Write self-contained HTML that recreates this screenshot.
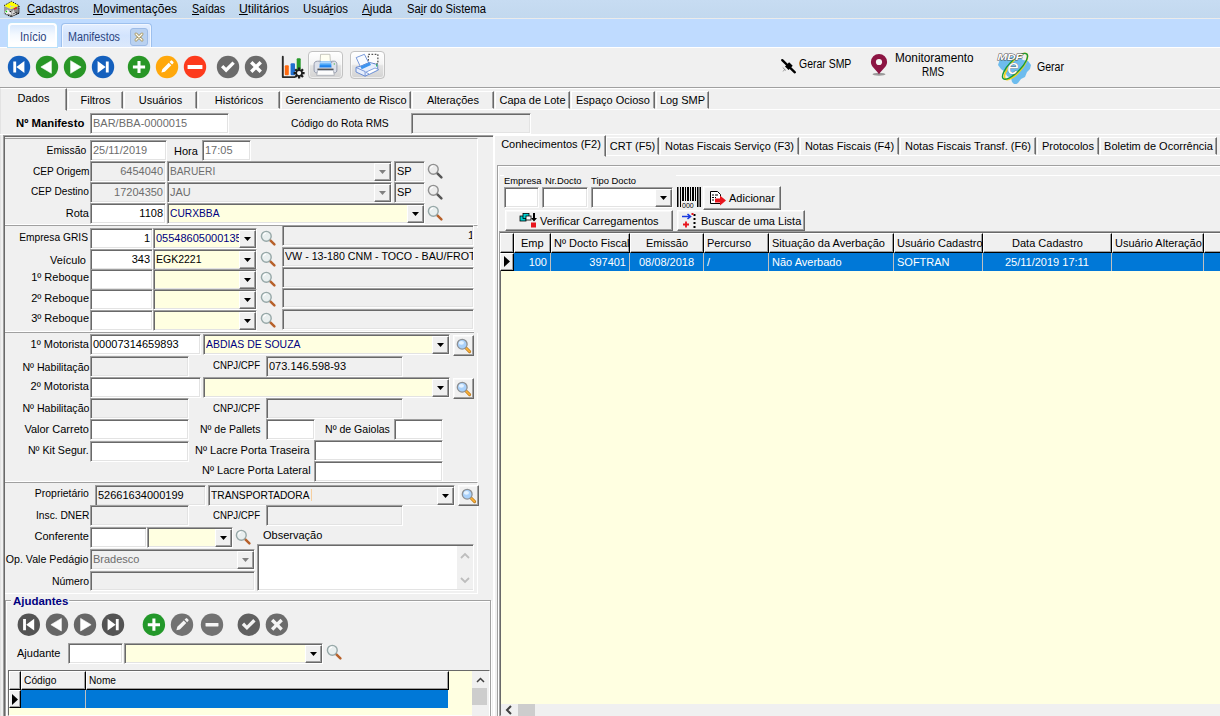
<!DOCTYPE html><html lang="pt-BR"><head><meta charset="utf-8"><title>Manifestos</title><style>
*{box-sizing:border-box;margin:0;padding:0}
html,body{width:1220px;height:716px;overflow:hidden}
body{background:#f0f0f0;font:11px/13px "Liberation Sans",sans-serif;color:#000;position:relative}
.a{position:absolute}
.t{white-space:nowrap;line-height:13px}
.b{font-weight:bold}
.in{background:#fff;border:1px solid;border-color:#a0a0a0 #fff #fff #a0a0a0;box-shadow:inset 1px 1px 0 #696969,inset -1px -1px 0 #e3e3e3;white-space:nowrap;overflow:hidden;padding:3px 0 0 2px;line-height:13px}
.in.r{text-align:right;padding-right:2px}
.in.g{background:#f0f0f0;color:#6d6d6d}
.in.gd{background:#f0f0f0}
.in.w{color:#6d6d6d}
.in.y{background:#ffffe1;color:#000080}
.in.yb{background:#ffffe1}
.cbtn{position:absolute;right:0;top:1px;bottom:0;width:17px;background:#f0f0f0;border:1px solid;border-color:#fff #696969 #696969 #fff;box-shadow:inset -1px -1px 0 #a0a0a0}
.cbtn svg{position:absolute;left:4px;top:6px}
.btn{background:#f0f0f0;border:1px solid;border-color:#fff #696969 #696969 #fff;box-shadow:inset -1px -1px 0 #a0a0a0,inset 1px 1px 0 #f8f8f8}
.sunk{border:1px solid;border-color:#a0a0a0 #fff #fff #a0a0a0}
.hl{height:2px;border-top:1px solid #a0a0a0;border-bottom:1px solid #fff}
.menu{font:12px/15px "Liberation Sans",sans-serif;color:#000}
.menu u{text-decoration:underline;text-underline-offset:1px}
.tab2{border:1px solid;border-color:#fff #696969 transparent #fff;box-shadow:inset -1px 0 0 #a0a0a0;text-align:center;line-height:13px}
.gh{background:#f0f0f0;border:1px solid;border-color:#fff #000 #000 #fff;box-shadow:inset -1px -1px 0 #a0a0a0;line-height:13px;padding:3px 0 0 2px;white-space:nowrap;overflow:hidden}
.gc{color:#fff;line-height:13px;padding-top:4px;white-space:nowrap;overflow:hidden}
</style></head><body>
<div class="a " style="left:0px;top:0px;width:1220px;height:19px;background:linear-gradient(#c7dcf2,#c2d8ee)"></div>
<div class="a " style="left:0px;top:18px;width:1220px;height:1px;background:#ebebeb"></div>
<svg class="a" style="left:3px;top:0px" width="18" height="18" viewBox="0 0 18 18"><path d="M1 5.800L8.500 1.500 16 5.800 8 9.300z" fill="#ffff00"/><path d="M1 6l7 3.300v7.200L1 13z" fill="#9a9a9a"/><path d="M8 9.300l8-3.500v7.400l-8 3.300z" fill="#8c8c8c"/><path d="M1 5.600L8.500 1.300 16 5.600" fill="none" stroke="#000" stroke-width="1" stroke-dasharray="1 1.100"/><path d="M16 6v7.200L8 16.600 1 13.200" fill="none" stroke="#000" stroke-width="1.100" stroke-dasharray="1 .800"/><path d="M1.500 12l3-2.500 2 1.500 1.500-1 .500 5-3-1.500-1.500 1z" fill="#f4f4f4"/><path d="M9 12l1.500-2.500 1.500 4 1-2.500v4l-3.500 1.500z" fill="#d8d8d8"/><path d="M7.500 5v3.500M7.500 6.500h4" stroke="#ccc" stroke-width=".800" fill="none"/><rect x="10.800" y="8.200" width="1.600" height="1.200" fill="#f00"/><rect x="12.200" y="7.400" width="1.800" height="1.200" fill="#f00"/><rect x="2.700" y="10.800" width="1.400" height="1.400" fill="#0d0"/><circle cx="7.300" cy="11.500" r=".700" fill="#000"/><circle cx="11" cy="13.600" r=".600" fill="#000"/><circle cx="13" cy="12.400" r=".600" fill="#000"/><circle cx="13" cy="14.400" r=".600" fill="#000"/><circle cx="15" cy="13.300" r=".600" fill="#000"/><circle cx="9" cy="16" r=".600" fill="#000"/><circle cx="11" cy="15.300" r=".600" fill="#000"/></svg>
<div class="a t menu" style="left:27px;top:2px;transform:scaleX(0.943);transform-origin:0 0"><u>C</u>adastros</div>
<div class="a t menu" style="left:93.4px;top:2px;transform:scaleX(1.001);transform-origin:0 0"><u>M</u>ovimentações</div>
<div class="a t menu" style="left:192px;top:2px;transform:scaleX(0.883);transform-origin:0 0"><u>S</u>aídas</div>
<div class="a t menu" style="left:239px;top:2px;transform:scaleX(1.013);transform-origin:0 0"><u>U</u>tilitários</div>
<div class="a t menu" style="left:303px;top:2px;transform:scaleX(0.950);transform-origin:0 0">Usuá<u>r</u>ios</div>
<div class="a t menu" style="left:362px;top:2px;transform:scaleX(0.977);transform-origin:0 0"><u>A</u>juda</div>
<div class="a t menu" style="left:407px;top:2px;transform:scaleX(0.933);transform-origin:0 0">Sa<u>i</u>r do Sistema</div>
<div class="a " style="left:0px;top:19px;width:1220px;height:28px;background:#bfdbff"></div>
<div class="a " style="left:0px;top:47px;width:1220px;height:1px;background:#fff"></div>
<div class="a " style="left:8px;top:23px;width:49px;height:24px;border:2px solid #fff;border-bottom:none;border-radius:4px 4px 0 0;background:linear-gradient(#d9e9fd,#f4f9ff 45%,#ffffff 85%);box-shadow:0 0 0 1px #b9e1fb"></div>
<div class="a t " style="left:20px;top:30px;font:12px/15px 'Liberation Sans',sans-serif;color:#2b4480;transform:scaleX(.925);transform-origin:0 0">Início</div>
<div class="a " style="left:60.5px;top:23px;width:91px;height:24px;border:1px solid #9dc0ee;border-bottom:none;border-radius:4px 4px 0 0;background:linear-gradient(#e3eeff,#d3e4fd 50%,#dbe8fb);box-shadow:inset 1px 1px 0 #f2f7ff,inset -1px 0 0 #f2f7ff"></div>
<div class="a t " style="left:68px;top:30px;font:12px/15px 'Liberation Sans',sans-serif;color:#2b4480;transform:scaleX(.896);transform-origin:0 0">Manifestos</div>
<div class="a " style="left:130px;top:28px;width:18px;height:18px;border:1px solid #9dbbe6;border-radius:3px;background:#b9d1f0"></div>
<svg class="a" style="left:133px;top:31px" width="12" height="12" viewBox="0 0 12 12"><path d="M3 3l6 6M9 3l-6 6" stroke="#a3925a" stroke-width="2.900" stroke-linecap="round"/><path d="M3 3l6 6M9 3l-6 6" stroke="#fffef6" stroke-width="1.300" stroke-linecap="round"/></svg>
<div class="a " style="left:0px;top:48px;width:1220px;height:39px;background:#f0f0f0"></div>
<div class="a hl" style="left:0px;top:87px;width:1220px;height:2px;"></div>
<svg class="a" style="left:6px;top:54px" width="26" height="26" viewBox="0 0 26 26"><g transform="translate(13 13)"><circle r="11.2" fill="#1560bd"/><g transform="scale(1.018)" opacity="1"><path d="M-5.600 -5.500h2.800v11H-5.600z M5.300 -5.800V5.800L-2.600 0z" fill="#fff"/></g></g></svg>
<svg class="a" style="left:34px;top:54px" width="26" height="26" viewBox="0 0 26 26"><g transform="translate(13 13)"><circle r="11.2" fill="#289626"/><g transform="scale(1.018)" opacity="1"><path d="M4.300 -6.200V6.200L-6 0z" fill="#fff" stroke="#fff" stroke-width=".6" stroke-linejoin="round"/></g></g></svg>
<svg class="a" style="left:62px;top:54px" width="26" height="26" viewBox="0 0 26 26"><g transform="translate(13 13)"><circle r="11.2" fill="#289626"/><g transform="scale(1.018)" opacity="1"><path d="M-4.300 -6.200V6.200L6 0z" fill="#fff" stroke="#fff" stroke-width=".6" stroke-linejoin="round"/></g></g></svg>
<svg class="a" style="left:90px;top:54px" width="26" height="26" viewBox="0 0 26 26"><g transform="translate(13 13)"><circle r="11.2" fill="#1560bd"/><g transform="scale(1.018)" opacity="1"><path d="M5.600 -5.500h-2.800v11H5.600z M-5.300 -5.800V5.800L2.600 0z" fill="#fff"/></g></g></svg>
<svg class="a" style="left:126px;top:54px" width="26" height="26" viewBox="0 0 26 26"><g transform="translate(13 13)"><circle r="11.2" fill="#289626"/><g transform="scale(1.018)" opacity="1"><path d="M-1.5 -6h3v4.5H6v3H1.5V6h-3V1.5H-6v-3h4.5z" fill="#fff"/></g></g></svg>
<svg class="a" style="left:154px;top:54px" width="26" height="26" viewBox="0 0 26 26"><g transform="translate(13 13)"><circle r="11.2" fill="#ffa80c"/><g transform="scale(1.018)" opacity="1"><path d="M-5.5 5.5l.9-3.4 6.3-6.3 2.5 2.5-6.3 6.3z M2.5 -5l1.2-1.2a1 1 0 0 1 1.4 0l1.1 1.1a1 1 0 0 1 0 1.4L5 -2.5z" fill="#fff"/></g></g></svg>
<svg class="a" style="left:182px;top:54px" width="26" height="26" viewBox="0 0 26 26"><g transform="translate(13 13)"><circle r="11.2" fill="#fd3a1c"/><g transform="scale(1.018)" opacity="1"><rect x="-7.300" y="-1.900" width="14.600" height="3.800" rx=".5" fill="#fff"/></g></g></svg>
<svg class="a" style="left:215px;top:54px" width="26" height="26" viewBox="0 0 26 26"><g transform="translate(13 13)"><circle r="11.2" fill="#6b6b6b"/><g transform="scale(1.018)" opacity="1"><path d="M-6 0.2l2-2 2.4 2.4 5.4-5.4 2 2-7.4 7.4z" fill="#fff" transform="scale(1.15)"/></g></g></svg>
<svg class="a" style="left:243px;top:54px" width="26" height="26" viewBox="0 0 26 26"><g transform="translate(13 13)"><circle r="11.2" fill="#6b6b6b"/><g transform="scale(1.018)" opacity="1"><path d="M-5 -3l2-2 3 3 3-3 2 2-3 3 3 3-2 2-3-3-3 3-2-2 3-3z" fill="#fff" transform="scale(1.17)"/></g></g></svg>
<svg class="a" style="left:281px;top:55px" width="26" height="26" viewBox="0 0 26 26"><path d="M1.800 1.800v20.300h12" fill="none" stroke="#2a2a2a" stroke-width="1.900" stroke-linecap="round" stroke-linejoin="round"/><rect x="3.800" y="10.200" width="4" height="10" rx="1" fill="#ff6a10"/><rect x="9.600" y="8.200" width="4.400" height="12" rx="1" fill="#1f6fd0"/><rect x="15.700" y="3.200" width="4" height="12" rx="1" fill="#27992b"/><g transform="translate(18.100 18.100)"><circle r="3.700" fill="#1d1d1d"/><g stroke="#1d1d1d" stroke-width="2.300"><path d="M0 -5.500V5.500M-5.500 0H5.500M-3.900 -3.900L3.900 3.900M3.900 -3.900L-3.900 3.900"/></g><circle r="2.100" fill="#f6f6f6"/></g></svg>
<div class="a " style="left:308px;top:51px;width:35px;height:28px;border:1px solid #c2c2c2;border-radius:4px;background:linear-gradient(#ffffff 0%,#f4f4f4 47%,#e3e3e3 53%,#d3d3d3 100%);box-shadow:inset 0 0 0 1px rgba(255,255,255,.6)"></div>
<div class="a " style="left:350px;top:51px;width:35px;height:28px;border:1px solid #c2c2c2;border-radius:4px;background:linear-gradient(#ffffff 0%,#f4f4f4 47%,#e3e3e3 53%,#d3d3d3 100%);box-shadow:inset 0 0 0 1px rgba(255,255,255,.6)"></div>
<svg class="a" style="left:313px;top:53px" width="26" height="24" viewBox="0 0 26 24"><path d="M7.600 1.300h9.300l.6 9H7z" fill="#fffff2" stroke="#b9b9b0" stroke-width=".8"/><path d="M4.500 8.200h3l-.3 1.500h11.600l-.3-1.500h3c1.600 0 2.400 1.500 2.400 3.500v5.300c0 1.600-.8 2.800-2.300 2.800H3.400c-1.500 0-2.300-1.200-2.300-2.800v-5.300c0-2 .8-3.500 3.400-3.500z" fill="#dde1ea" stroke="#8c93a6" stroke-width=".9"/><path d="M7.200 8.500h10.600l.8 6H6.400z" fill="#1f84ee"/><path d="M7.200 8.500h10.600l.3 2.200H6.900z" fill="#a9d6ff"/><path d="M6.900 10.700h11.200l.2 1.500H6.700z" fill="#4ea9f7"/><path d="M4.500 16.300h16" stroke="#3a3a3a" stroke-width="1.300"/><path d="M4.600 17.300h15.800l.9 5H3.700z" fill="#fdfdfd" stroke="#a4a8b2" stroke-width=".8"/><circle cx="21.300" cy="11" r=".7" fill="#58b858"/></svg>
<svg class="a" style="left:354px;top:52px" width="28" height="26" viewBox="0 0 28 26"><rect x="14.300" y="2.300" width="9.600" height="9.600" fill="#fdfdfd" stroke="#2a2a2a" stroke-width="1" stroke-dasharray="1.700 1.500"/><path d="M2.200 5.600l8.200-3.300 4.300 8.600-8.400 3.600z" fill="#f8fbff" stroke="#6b8fd6" stroke-width=".9"/><path d="M6.300 14.500l8.400-3.600 1.200 2.400-8.600 3.700z" fill="#2a86ea"/><path d="M2 15.300l4.300-1 9.400-3.900 8 2.300v5.500l-12.600 6-9.100-4.200z" fill="#e6eefc" stroke="#5f83d0" stroke-width=".9"/><path d="M6.300 14.400l9.400-4 1.300 2.600-9.300 4.200z" fill="#3d95f0"/><path d="M2 15.500l9.100 4v4.700" fill="none" stroke="#5f83d0" stroke-width=".8"/><path d="M11.800 20.200l9.200-4.200 3.800 1.600-9.300 4.600z" fill="#fff" stroke="#6b8fd6" stroke-width=".8"/><path d="M22.700 12.300v2.200" stroke="#22b14c" stroke-width="1.100"/></svg>
<svg class="a" style="left:780px;top:57.500px" width="17" height="17" viewBox="0 0 19 19"><path d="M2.500 2.400L16.600 16" stroke="#000" stroke-width="2.600" stroke-linecap="round"/><path d="M10.200 4.800l4 4-4.600 4.600-4-4z" fill="#000"/><path d="M3 10.500l3.500 3.500M3.500 15l2-2.500" stroke="#8a8a8a" stroke-width="1" fill="none"/></svg>
<div class="a t " style="left:798.6px;top:58px;font-size:12px;transform:scaleX(.872);transform-origin:0 0">Gerar SMP</div>
<svg class="a" style="left:869px;top:53px" width="20" height="25" viewBox="0 0 20 25"><ellipse cx="10" cy="21.200" rx="6.500" ry="1.500" fill="#9a9a9a"/><path d="M10 1a8.100 8.100 0 0 1 8.100 8.100c0 4.600-5 7.600-8.100 12.100C6.900 16.700 1.900 13.700 1.900 9.100A8.100 8.100 0 0 1 10 1z" fill="#8c1543"/><circle cx="10" cy="9" r="3.100" fill="#f4f4f4"/></svg>
<div class="a t " style="left:894.6px;top:52px;font-size:12px;transform:scaleX(.982);transform-origin:0 0">Monitoramento</div>
<div class="a t " style="left:922.3px;top:66px;font-size:12px;transform:scaleX(.825);transform-origin:0 0">RMS</div>
<svg class="a" style="left:995px;top:50px" width="40" height="34" viewBox="0 0 40 34"><path d="M5 9l4-2 5 1 4-2 6 1 4 3 5 1 3 4-1 4-3 3-2 5-4 2-3 4-3 2-3-3-1-4-4-2-2-4-4-3-3-4z" fill="#6dbcee"/><ellipse cx="21" cy="16.500" rx="16.500" ry="5.800" fill="none" stroke="#f2d21a" stroke-width="1.700" transform="rotate(-50 21 16.500)"/><ellipse cx="20" cy="16.300" rx="17" ry="5.800" fill="none" stroke="#169a3c" stroke-width="1.400" transform="rotate(-46 20 16.300)"/><text x="12.500" y="23.600" font-family="Liberation Sans,sans-serif" font-style="italic" font-size="20" fill="#fff" stroke="#666" stroke-width=".6" paint-order="stroke">e</text><text x="2.600" y="10" font-family="Liberation Sans,sans-serif" font-style="italic" font-weight="bold" font-size="9.500" fill="#fff" stroke="#555" stroke-width=".9" paint-order="stroke" textLength="25" lengthAdjust="spacingAndGlyphs">MDF</text></svg>
<div class="a t " style="left:1037.3px;top:61px;font-size:12px;transform:scaleX(.88);transform-origin:0 0">Gerar</div>
<div class="a " style="left:0px;top:109px;width:1220px;height:2px;border-top:1px solid #fff"></div>
<div class="a tab2" style="left:68px;top:91px;width:55px;height:18px;"><div class="t" style="padding-top:2px">Filtros</div></div>
<div class="a tab2" style="left:124px;top:91px;width:73px;height:18px;"><div class="t" style="padding-top:2px">Usuários</div></div>
<div class="a tab2" style="left:198px;top:91px;width:82px;height:18px;"><div class="t" style="padding-top:2px">Históricos</div></div>
<div class="a tab2" style="left:281px;top:91px;width:130px;height:18px;"><div class="t" style="padding-top:2px">Gerenciamento de Risco</div></div>
<div class="a tab2" style="left:412px;top:91px;width:82px;height:18px;"><div class="t" style="padding-top:2px">Alterações</div></div>
<div class="a tab2" style="left:495px;top:91px;width:75px;height:18px;"><div class="t" style="padding-top:2px">Capa de Lote</div></div>
<div class="a tab2" style="left:571px;top:91px;width:84px;height:18px;"><div class="t" style="padding-top:2px">Espaço Ocioso</div></div>
<div class="a tab2" style="left:656px;top:91px;width:53px;height:18px;"><div class="t" style="padding-top:2px">Log SMP</div></div>
<div class="a " style="left:0px;top:88px;width:67px;height:23px;border:1px solid;border-color:#fff #696969 transparent #e3e3e3;box-shadow:inset -1px 0 0 #a0a0a0;background:#f0f0f0;text-align:center"><div class="t" style="padding-top:3px">Dados</div></div>
<div class="a " style="left:0px;top:89px;width:1px;height:627px;background:#e3e3e3"></div>
<div class="a t b" style="right:1135.5px;top:117px;transform:scaleX(1.03);transform-origin:100% 0;">Nº Manifesto</div>
<div class="a in w" style="left:90px;top:113px;width:139px;height:21px;"><span style="">BAR/BBA-0000015</span></div>
<div class="a t " style="left:291px;top:117px;transform:scaleX(0.94);transform-origin:0 0;">Código do Rota RMS</div>
<div class="a in gd" style="left:411px;top:113px;width:120px;height:21px;"><span style=""></span></div>
<div class="a " style="left:0px;top:134px;width:1220px;height:1px;background:#fff"></div>
<div class="a " style="left:3px;top:135px;width:490px;height:1px;background:#a0a0a0"></div>
<div class="a " style="left:4px;top:136px;width:489px;height:1px;background:#696969"></div>
<div class="a " style="left:3px;top:135px;width:1px;height:581px;background:#a0a0a0"></div>
<div class="a " style="left:4px;top:136px;width:1px;height:580px;background:#696969"></div>
<div class="a " style="left:493px;top:136px;width:1px;height:580px;background:#fff"></div>
<div class="a " style="left:5px;top:138px;width:473px;height:87px;border-top:1px solid #a0a0a0;border-bottom:1px solid #fff;border-right:1px solid #fff"></div>
<div class="a " style="left:5px;top:225px;width:473px;height:107px;border-top:1px solid #a0a0a0;border-bottom:1px solid #fff;border-right:1px solid #fff"></div>
<div class="a " style="left:5px;top:332px;width:473px;height:150px;border-top:1px solid #a0a0a0;border-bottom:1px solid #fff;border-right:1px solid #fff"></div>
<div class="a " style="left:5px;top:482px;width:473px;height:112px;border-top:1px solid #a0a0a0;border-bottom:1px solid #fff;border-right:1px solid #fff"></div>
<div class="a t " style="right:1134px;top:144px;transform:scaleX(0.94);transform-origin:100% 0;">Emissão</div>
<div class="a in w" style="left:90px;top:140px;width:77px;height:21px;"><span style="">25/11/2019</span></div>
<div class="a t " style="left:174px;top:144.5px;">Hora</div>
<div class="a in w" style="left:202px;top:140px;width:49px;height:21px;"><span style="">17:05</span></div>
<div class="a t " style="right:1130.5px;top:165px;transform:scaleX(0.92);transform-origin:100% 0;">CEP Origem</div>
<div class="a in g r" style="left:90px;top:161px;width:76px;height:21px;"><span style="">6454040</span></div>
<div class="a in g" style="left:167px;top:161px;width:225px;height:21px;"><span style="display:inline-block;transform:scaleX(0.925);transform-origin:0 0">BARUERI</span><div class="cbtn"><svg width="7" height="4" viewBox="0 0 7 4"><path d="M0 0h7L3.5 4z" fill="#808080"/></svg></div></div>
<div class="a in gd" style="left:394px;top:161px;width:31px;height:21px;"><span style="">SP</span></div>
<svg class="a" style="left:427.3px;top:162.6px" width="17" height="17" viewBox="0 0 17 17"><line x1="9.800" y1="9.800" x2="14.400" y2="14.400" stroke="#555" stroke-width="2.500" stroke-linecap="round"/><circle cx="6.300" cy="6.300" r="4.900" fill="#ececec" stroke="#909090" stroke-width="1.400"/><path d="M3.400 5.300a3.100 3.100 0 0 1 2.600-2.200" stroke="#fff" stroke-width="1.100" fill="none"/></svg>
<div class="a t " style="right:1131px;top:185px;transform:scaleX(0.92);transform-origin:100% 0;">CEP Destino</div>
<div class="a in g r" style="left:90px;top:182px;width:76px;height:21px;"><span style="">17204350</span></div>
<div class="a in g" style="left:167px;top:182px;width:225px;height:21px;"><span>JAU</span><div class="cbtn"><svg width="7" height="4" viewBox="0 0 7 4"><path d="M0 0h7L3.5 4z" fill="#808080"/></svg></div></div>
<div class="a in gd" style="left:394px;top:182px;width:31px;height:21px;"><span style="">SP</span></div>
<svg class="a" style="left:427.3px;top:183.6px" width="17" height="17" viewBox="0 0 17 17"><line x1="9.800" y1="9.800" x2="14.400" y2="14.400" stroke="#555" stroke-width="2.500" stroke-linecap="round"/><circle cx="6.300" cy="6.300" r="4.900" fill="#ececec" stroke="#909090" stroke-width="1.400"/><path d="M3.400 5.300a3.100 3.100 0 0 1 2.600-2.200" stroke="#fff" stroke-width="1.100" fill="none"/></svg>
<div class="a t " style="right:1131px;top:207px;">Rota</div>
<div class="a in r" style="left:90px;top:203px;width:76px;height:21px;"><span style="">1108</span></div>
<div class="a in y" style="left:167px;top:203px;width:258px;height:21px;"><span style="display:inline-block;transform:scaleX(0.93);transform-origin:0 0">CURXBBA</span><div class="cbtn"><svg width="7" height="4" viewBox="0 0 7 4"><path d="M0 0h7L3.5 4z" fill="#000"/></svg></div></div>
<svg class="a" style="left:427.3px;top:205.1px" width="17" height="17" viewBox="0 0 17 17"><line x1="9.800" y1="9.800" x2="14.400" y2="14.400" stroke="#b7602a" stroke-width="2.500" stroke-linecap="round"/><circle cx="6.300" cy="6.300" r="4.900" fill="#e9efef" stroke="#97a8a8" stroke-width="1.400"/><path d="M3.400 5.300a3.100 3.100 0 0 1 2.600-2.200" stroke="#fff" stroke-width="1.100" fill="none"/></svg>
<div class="a t " style="right:1132.2px;top:231px;transform:scaleX(0.93);transform-origin:100% 0;">Empresa GRIS</div>
<div class="a in r" style="left:90px;top:228px;width:63px;height:21px;"><span style="">1</span></div>
<div class="a in y" style="left:153px;top:228px;width:104px;height:21px;"><span>05548605000135</span><div class="cbtn"><svg width="7" height="4" viewBox="0 0 7 4"><path d="M0 0h7L3.5 4z" fill="#000"/></svg></div></div>
<svg class="a" style="left:260.3px;top:230.1px" width="17" height="17" viewBox="0 0 17 17"><line x1="9.800" y1="9.800" x2="14.400" y2="14.400" stroke="#b7602a" stroke-width="2.500" stroke-linecap="round"/><circle cx="6.300" cy="6.300" r="4.900" fill="#e9efef" stroke="#97a8a8" stroke-width="1.400"/><path d="M3.400 5.300a3.100 3.100 0 0 1 2.600-2.200" stroke="#fff" stroke-width="1.100" fill="none"/></svg>
<div class="a in gd" style="left:282px;top:225px;width:192px;height:21px;"><span style=""></span></div>
<div class="a t " style="right:1134px;top:253.7px;">Veículo</div>
<div class="a in r" style="left:90px;top:249px;width:63px;height:21px;"><span style="">343</span></div>
<div class="a in yb" style="left:153px;top:249px;width:104px;height:21px;"><span style="display:inline-block;transform:scaleX(0.955);transform-origin:0 0">EGK2221</span><div class="cbtn"><svg width="7" height="4" viewBox="0 0 7 4"><path d="M0 0h7L3.5 4z" fill="#000"/></svg></div></div>
<svg class="a" style="left:260.3px;top:251.1px" width="17" height="17" viewBox="0 0 17 17"><line x1="9.800" y1="9.800" x2="14.400" y2="14.400" stroke="#b7602a" stroke-width="2.500" stroke-linecap="round"/><circle cx="6.300" cy="6.300" r="4.900" fill="#e9efef" stroke="#97a8a8" stroke-width="1.400"/><path d="M3.400 5.300a3.100 3.100 0 0 1 2.600-2.200" stroke="#fff" stroke-width="1.100" fill="none"/></svg>
<div class="a in gd" style="left:282px;top:247px;width:192px;height:20px;"><span style=""></span></div>
<div class="a t " style="right:1131px;top:270.5px;">1º Reboque</div>
<div class="a in r" style="left:90px;top:269px;width:63px;height:21px;"><span style=""></span></div>
<div class="a in yb" style="left:153px;top:269px;width:104px;height:21px;"><span></span><div class="cbtn"><svg width="7" height="4" viewBox="0 0 7 4"><path d="M0 0h7L3.5 4z" fill="#000"/></svg></div></div>
<svg class="a" style="left:260.3px;top:271.1px" width="17" height="17" viewBox="0 0 17 17"><line x1="9.800" y1="9.800" x2="14.400" y2="14.400" stroke="#b7602a" stroke-width="2.500" stroke-linecap="round"/><circle cx="6.300" cy="6.300" r="4.900" fill="#e9efef" stroke="#97a8a8" stroke-width="1.400"/><path d="M3.400 5.300a3.100 3.100 0 0 1 2.600-2.200" stroke="#fff" stroke-width="1.100" fill="none"/></svg>
<div class="a in gd" style="left:282px;top:267px;width:192px;height:21px;"><span style=""></span></div>
<div class="a t " style="right:1131px;top:291.8px;">2º Reboque</div>
<div class="a in r" style="left:90px;top:289px;width:63px;height:21px;"><span style=""></span></div>
<div class="a in yb" style="left:153px;top:289px;width:104px;height:21px;"><span></span><div class="cbtn"><svg width="7" height="4" viewBox="0 0 7 4"><path d="M0 0h7L3.5 4z" fill="#000"/></svg></div></div>
<svg class="a" style="left:260.3px;top:291.1px" width="17" height="17" viewBox="0 0 17 17"><line x1="9.800" y1="9.800" x2="14.400" y2="14.400" stroke="#b7602a" stroke-width="2.500" stroke-linecap="round"/><circle cx="6.300" cy="6.300" r="4.900" fill="#e9efef" stroke="#97a8a8" stroke-width="1.400"/><path d="M3.400 5.300a3.100 3.100 0 0 1 2.600-2.200" stroke="#fff" stroke-width="1.100" fill="none"/></svg>
<div class="a in gd" style="left:282px;top:288px;width:192px;height:20px;"><span style=""></span></div>
<div class="a t " style="right:1131px;top:312px;">3º Reboque</div>
<div class="a in r" style="left:90px;top:310px;width:63px;height:21px;"><span style=""></span></div>
<div class="a in yb" style="left:153px;top:310px;width:104px;height:21px;"><span></span><div class="cbtn"><svg width="7" height="4" viewBox="0 0 7 4"><path d="M0 0h7L3.5 4z" fill="#000"/></svg></div></div>
<svg class="a" style="left:260.3px;top:312.1px" width="17" height="17" viewBox="0 0 17 17"><line x1="9.800" y1="9.800" x2="14.400" y2="14.400" stroke="#b7602a" stroke-width="2.500" stroke-linecap="round"/><circle cx="6.300" cy="6.300" r="4.900" fill="#e9efef" stroke="#97a8a8" stroke-width="1.400"/><path d="M3.400 5.300a3.100 3.100 0 0 1 2.600-2.200" stroke="#fff" stroke-width="1.100" fill="none"/></svg>
<div class="a in gd" style="left:282px;top:309px;width:192px;height:21px;"><span style=""></span></div>
<div class="a " style="left:460px;top:229px;width:11.6px;height:13px;overflow:hidden;text-align:right;white-space:nowrap"><span style="margin-right:-2.600px">1</span></div>
<div class="a " style="left:285px;top:250px;width:188px;height:14px;overflow:hidden;white-space:nowrap"><span style="display:inline-block;transform:scaleX(.97);transform-origin:0 0">VW - 13-180 CNM - TOCO - BAU/FROTA</span></div>
<div class="a " style="left:474px;top:228px;width:4px;height:105px;background:#f0f0f0"></div>
<div class="a t " style="right:1131px;top:338px;">1º Motorista</div>
<div class="a in " style="left:90px;top:334px;width:111px;height:21px;"><span style="">00007314659893</span></div>
<div class="a in y" style="left:203px;top:334px;width:247px;height:21px;"><span style="display:inline-block;transform:scaleX(0.948);transform-origin:0 0">ABDIAS DE SOUZA</span><div class="cbtn"><svg width="7" height="4" viewBox="0 0 7 4"><path d="M0 0h7L3.5 4z" fill="#000"/></svg></div></div>
<div class="a btn" style="left:453px;top:335px;width:21px;height:21px;"></div>
<svg class="a" style="left:456px;top:338px" width="16" height="16" viewBox="0 0 16 16"><line x1="9.500" y1="9.500" x2="13.600" y2="13.600" stroke="#b9781a" stroke-width="3" stroke-linecap="round"/><line x1="9.800" y1="9.800" x2="13.500" y2="13.500" stroke="#fdb237" stroke-width="1.700" stroke-linecap="round"/><circle cx="6.200" cy="6.200" r="4.900" fill="#a9d1fb" stroke="#8d9094" stroke-width="1.300"/><ellipse cx="5.400" cy="4.800" rx="2.600" ry="1.900" fill="#e4f2ff"/></svg>
<div class="a t " style="right:1131px;top:360.7px;transform:scaleX(0.965);transform-origin:100% 0;">Nº Habilitação</div>
<div class="a in gd" style="left:90px;top:356px;width:99px;height:21px;"><span style=""></span></div>
<div class="a t " style="left:213px;top:359px;transform:scaleX(0.875);transform-origin:0 0;">CNPJ/CPF</div>
<div class="a in gd" style="left:266px;top:356px;width:137px;height:21px;"><span style="">073.146.598-93</span></div>
<div class="a t " style="right:1131px;top:380px;">2º Motorista</div>
<div class="a in " style="left:90px;top:377px;width:111px;height:21px;"><span style=""></span></div>
<div class="a in y" style="left:203px;top:377px;width:247px;height:21px;"><span></span><div class="cbtn"><svg width="7" height="4" viewBox="0 0 7 4"><path d="M0 0h7L3.5 4z" fill="#000"/></svg></div></div>
<div class="a btn" style="left:453px;top:378px;width:21px;height:21px;"></div>
<svg class="a" style="left:456px;top:381px" width="16" height="16" viewBox="0 0 16 16"><line x1="9.500" y1="9.500" x2="13.600" y2="13.600" stroke="#b9781a" stroke-width="3" stroke-linecap="round"/><line x1="9.800" y1="9.800" x2="13.500" y2="13.500" stroke="#fdb237" stroke-width="1.700" stroke-linecap="round"/><circle cx="6.200" cy="6.200" r="4.900" fill="#a9d1fb" stroke="#8d9094" stroke-width="1.300"/><ellipse cx="5.400" cy="4.800" rx="2.600" ry="1.900" fill="#e4f2ff"/></svg>
<div class="a t " style="right:1131px;top:402px;transform:scaleX(0.965);transform-origin:100% 0;">Nº Habilitação</div>
<div class="a in gd" style="left:90px;top:398px;width:99px;height:21px;"><span style=""></span></div>
<div class="a t " style="left:213px;top:402px;transform:scaleX(0.875);transform-origin:0 0;">CNPJ/CPF</div>
<div class="a in gd" style="left:266px;top:398px;width:137px;height:21px;"><span style=""></span></div>
<div class="a t " style="right:1131px;top:423px;">Valor Carreto</div>
<div class="a in " style="left:90px;top:419px;width:99px;height:21px;"><span style=""></span></div>
<div class="a t " style="left:200.4px;top:423px;transform:scaleX(0.955);transform-origin:0 0;">Nº de Pallets</div>
<div class="a in " style="left:266px;top:419px;width:49px;height:21px;"><span style=""></span></div>
<div class="a t " style="left:325.4px;top:423px;transform:scaleX(0.96);transform-origin:0 0;">Nº de Gaiolas</div>
<div class="a in " style="left:394px;top:419px;width:49px;height:21px;"><span style=""></span></div>
<div class="a t " style="right:1131px;top:444px;transform:scaleX(0.97);transform-origin:100% 0;">Nº Kit Segur.</div>
<div class="a in " style="left:90px;top:441px;width:99px;height:21px;"><span style=""></span></div>
<div class="a t " style="left:195px;top:444px;">Nº Lacre Porta Traseira</div>
<div class="a in " style="left:314px;top:440px;width:129px;height:21px;"><span style=""></span></div>
<div class="a t " style="left:202px;top:464px;">Nº Lacre Porta Lateral</div>
<div class="a in " style="left:314px;top:461px;width:129px;height:21px;"><span style=""></span></div>
<div class="a t " style="right:1131.5px;top:487px;transform:scaleX(0.95);transform-origin:100% 0;">Proprietário</div>
<div class="a in gd" style="left:95px;top:485px;width:111px;height:21px;"><span style="">52661634000199</span></div>
<div class="a in gd" style="left:208px;top:485px;width:247px;height:21px;"><span style="display:inline-block;transform:scaleX(0.93);transform-origin:0 0">TRANSPORTADORA</span><div class="cbtn"><svg width="7" height="4" viewBox="0 0 7 4"><path d="M0 0h7L3.5 4z" fill="#000"/></svg></div></div>
<div class="a btn" style="left:458px;top:485px;width:21px;height:21px;"></div>
<svg class="a" style="left:461px;top:488px" width="16" height="16" viewBox="0 0 16 16"><line x1="9.500" y1="9.500" x2="13.600" y2="13.600" stroke="#b9781a" stroke-width="3" stroke-linecap="round"/><line x1="9.800" y1="9.800" x2="13.500" y2="13.500" stroke="#fdb237" stroke-width="1.700" stroke-linecap="round"/><circle cx="6.200" cy="6.200" r="4.900" fill="#a9d1fb" stroke="#8d9094" stroke-width="1.300"/><ellipse cx="5.400" cy="4.800" rx="2.600" ry="1.900" fill="#e4f2ff"/></svg>
<div class="a t " style="right:1131px;top:509px;transform:scaleX(0.93);transform-origin:100% 0;">Insc. DNER</div>
<div class="a in gd" style="left:90px;top:505px;width:99px;height:21px;"><span style=""></span></div>
<div class="a t " style="left:213px;top:509px;transform:scaleX(0.875);transform-origin:0 0;">CNPJ/CPF</div>
<div class="a in gd" style="left:266px;top:505px;width:137px;height:21px;"><span style=""></span></div>
<div class="a t " style="right:1131px;top:530px;">Conferente</div>
<div class="a in " style="left:90px;top:527px;width:57px;height:21px;"><span style=""></span></div>
<div class="a in yb" style="left:147px;top:527px;width:86px;height:21px;"><span></span><div class="cbtn"><svg width="7" height="4" viewBox="0 0 7 4"><path d="M0 0h7L3.5 4z" fill="#000"/></svg></div></div>
<svg class="a" style="left:235.3px;top:529.1px" width="17" height="17" viewBox="0 0 17 17"><line x1="9.800" y1="9.800" x2="14.400" y2="14.400" stroke="#b7602a" stroke-width="2.500" stroke-linecap="round"/><circle cx="6.300" cy="6.300" r="4.900" fill="#e9efef" stroke="#97a8a8" stroke-width="1.400"/><path d="M3.400 5.300a3.100 3.100 0 0 1 2.600-2.200" stroke="#fff" stroke-width="1.100" fill="none"/></svg>
<div class="a t " style="left:263px;top:529px;">Observação</div>
<div class="a t " style="right:1132px;top:553px;transform:scaleX(0.968);transform-origin:100% 0;">Op. Vale Pedágio</div>
<div class="a in g" style="left:90px;top:549px;width:165px;height:21px;"><span>Bradesco</span><div class="cbtn"><svg width="7" height="4" viewBox="0 0 7 4"><path d="M0 0h7L3.5 4z" fill="#808080"/></svg></div></div>
<div class="a t " style="right:1131px;top:575px;transform:scaleX(0.95);transform-origin:100% 0;">Número</div>
<div class="a in gd" style="left:90px;top:571px;width:165px;height:20px;"><span style=""></span></div>
<div class="a " style="left:310.5px;top:489px;width:1px;height:12px;background:#f6cfa0"></div>
<div class="a in " style="left:257px;top:544px;width:217px;height:47px;"><span style=""></span></div>
<div class="a " style="left:457px;top:546px;width:16px;height:43px;background:#f0f0f0"></div>
<svg class="a" style="left:460px;top:552px" width="10" height="7" viewBox="0 0 10 7"><path d="M1 6l4-4 4 4" fill="none" stroke="#bdbdbd" stroke-width="1.800"/></svg>
<svg class="a" style="left:460px;top:577px" width="10" height="7" viewBox="0 0 10 7"><path d="M1 1l4 4 4-4" fill="none" stroke="#bdbdbd" stroke-width="1.800"/></svg>
<div class="a " style="left:5px;top:600px;width:486px;height:130px;border:1px solid #a0a0a0;box-shadow:inset 1px 1px 0 #fff, 1px 1px 0 #fff"></div>
<div class="a t " style="left:11px;top:594.5px;font-weight:bold;color:#000080;background:#f0f0f0;padding:0 1px 0 2px;transform:scaleX(1.04);transform-origin:2px 0">Ajudantes</div>
<svg class="a" style="left:16px;top:612px" width="26" height="26" viewBox="0 0 26 26"><g transform="translate(12.8 12.7)"><circle r="11.2" fill="#545454"/><g transform="scale(1.018)" opacity="1"><path d="M-5.600 -5.500h2.800v11H-5.600z M5.300 -5.800V5.800L-2.600 0z" fill="#fff"/></g></g></svg>
<svg class="a" style="left:44px;top:612px" width="26" height="26" viewBox="0 0 26 26"><g transform="translate(13 12.7)"><circle r="11.2" fill="#676767"/><g transform="scale(1.018)" opacity="1"><path d="M4.300 -6.200V6.200L-6 0z" fill="#fff" stroke="#fff" stroke-width=".6" stroke-linejoin="round"/></g></g></svg>
<svg class="a" style="left:72px;top:612px" width="26" height="26" viewBox="0 0 26 26"><g transform="translate(13 12.7)"><circle r="11.2" fill="#676767"/><g transform="scale(1.018)" opacity="1"><path d="M-4.300 -6.200V6.200L6 0z" fill="#fff" stroke="#fff" stroke-width=".6" stroke-linejoin="round"/></g></g></svg>
<svg class="a" style="left:100px;top:612px" width="26" height="26" viewBox="0 0 26 26"><g transform="translate(13 12.7)"><circle r="11.2" fill="#545454"/><g transform="scale(1.018)" opacity="1"><path d="M5.600 -5.500h-2.800v11H5.600z M-5.300 -5.800V5.800L2.600 0z" fill="#fff"/></g></g></svg>
<svg class="a" style="left:141px;top:612px" width="26" height="26" viewBox="0 0 26 26"><g transform="translate(12.9 12.7)"><circle r="11.2" fill="#23982a"/><g transform="scale(1.018)" opacity="1"><path d="M-1.5 -6h3v4.5H6v3H1.5V6h-3V1.5H-6v-3h4.5z" fill="#fff"/></g></g></svg>
<svg class="a" style="left:169px;top:612px" width="26" height="26" viewBox="0 0 26 26"><g transform="translate(13 12.7)"><circle r="11.2" fill="#727272"/><g transform="scale(1.018)" opacity="0.93"><path d="M-5.5 5.5l.9-3.4 6.3-6.3 2.5 2.5-6.3 6.3z M2.5 -5l1.2-1.2a1 1 0 0 1 1.4 0l1.1 1.1a1 1 0 0 1 0 1.4L5 -2.5z" fill="#fff"/></g></g></svg>
<svg class="a" style="left:199px;top:612px" width="26" height="26" viewBox="0 0 26 26"><g transform="translate(13 12.7)"><circle r="11.2" fill="#727272"/><g transform="scale(0.886)" opacity="0.93"><rect x="-7.300" y="-1.900" width="14.600" height="3.800" rx=".5" fill="#fff"/></g></g></svg>
<svg class="a" style="left:236px;top:612px" width="26" height="26" viewBox="0 0 26 26"><g transform="translate(12.8 12.7)"><circle r="11.2" fill="#606060"/><g transform="scale(1.018)" opacity="0.93"><path d="M-6 0.2l2-2 2.4 2.4 5.4-5.4 2 2-7.4 7.4z" fill="#fff" transform="scale(1.15)"/></g></g></svg>
<svg class="a" style="left:264px;top:612px" width="26" height="26" viewBox="0 0 26 26"><g transform="translate(12.9 12.7)"><circle r="11.2" fill="#6c6c6c"/><g transform="scale(1.018)" opacity="0.93"><path d="M-5 -3l2-2 3 3 3-3 2 2-3 3 3 3-2 2-3-3-3 3-2-2 3-3z" fill="#fff" transform="scale(1.17)"/></g></g></svg>
<div class="a t " style="left:17px;top:646.7px;">Ajudante</div>
<div class="a in " style="left:68px;top:643px;width:55px;height:21px;"><span style=""></span></div>
<div class="a in yb" style="left:124px;top:643px;width:199px;height:21px;"><span></span><div class="cbtn"><svg width="7" height="4" viewBox="0 0 7 4"><path d="M0 0h7L3.5 4z" fill="#000"/></svg></div></div>
<svg class="a" style="left:326.3px;top:644.1px" width="17" height="17" viewBox="0 0 17 17"><line x1="9.800" y1="9.800" x2="14.400" y2="14.400" stroke="#b7602a" stroke-width="2.500" stroke-linecap="round"/><circle cx="6.300" cy="6.300" r="4.900" fill="#e9efef" stroke="#97a8a8" stroke-width="1.400"/><path d="M3.400 5.300a3.100 3.100 0 0 1 2.600-2.200" stroke="#fff" stroke-width="1.100" fill="none"/></svg>
<div class="a " style="left:8px;top:670px;width:482px;height:46px;background:#ffffe1;border:1px solid;border-color:#696969 #fff #fff #696969"></div>
<div class="a gh" style="left:9px;top:671px;width:12px;height:19px;"></div>
<div class="a gh" style="left:21px;top:671px;width:65px;height:19px;padding-top:2px"><span style="display:inline-block;transform:scaleX(.93);transform-origin:0 0">Código</span></div>
<div class="a gh" style="left:86px;top:671px;width:363px;height:19px;padding-top:2px"><span style="display:inline-block;transform:scaleX(.92);transform-origin:0 0">Nome</span></div>
<div class="a gh" style="left:9px;top:690px;width:12px;height:18px;"><svg style="position:absolute;left:2px;top:3px" width="6" height="11" viewBox="0 0 6 11"><path d="M0 0v11l6-5.500z" fill="#000"/></svg></div>
<div class="a " style="left:21px;top:690px;width:427px;height:18px;background:#0078d7"></div>
<div class="a " style="left:85px;top:690px;width:1px;height:18px;background:#c0c0c0"></div>
<div class="a " style="left:472px;top:671px;width:17px;height:45px;background:#f0f0f0"></div>
<svg class="a" style="left:476px;top:677px" width="9" height="6" viewBox="0 0 9 6"><path d="M1 5l3.500-3.500L8 5" fill="none" stroke="#404040" stroke-width="1.5"/></svg>
<div class="a " style="left:472px;top:688px;width:15px;height:17px;background:#cdcdcd"></div>
<div class="a " style="left:497px;top:155px;width:730px;height:2px;border-top:1px solid #fff"></div>
<div class="a tab2" style="left:606px;top:137px;width:53px;height:18px;"><div class="t" style="padding-top:2px">CRT (F5)</div></div>
<div class="a tab2" style="left:660px;top:137px;width:139px;height:18px;"><div class="t" style="padding-top:2px">Notas Fiscais Serviço (F3)</div></div>
<div class="a tab2" style="left:800px;top:137px;width:99px;height:18px;"><div class="t" style="padding-top:2px">Notas Fiscais (F4)</div></div>
<div class="a tab2" style="left:900px;top:137px;width:136px;height:18px;"><div class="t" style="padding-top:2px">Notas Fiscais Transf. (F6)</div></div>
<div class="a tab2" style="left:1037px;top:137px;width:62px;height:18px;"><div class="t" style="padding-top:2px">Protocolos</div></div>
<div class="a tab2" style="left:1100px;top:137px;width:117px;height:18px;"><div class="t" style="padding-top:2px">Boletim de Ocorrência</div></div>
<div class="a " style="left:494px;top:135px;width:112px;height:22px;padding-left:2px;border:1px solid;border-color:#fff #696969 transparent #fff;box-shadow:inset -1px 0 0 #a0a0a0;background:#f0f0f0;text-align:center"><div class="t" style="padding-top:2px">Conhecimentos (F2)</div></div>
<div class="a " style="left:494px;top:135px;width:1px;height:581px;background:#fff"></div>
<div class="a " style="left:497px;top:165px;width:730px;height:560px;border:1px solid;border-color:#a0a0a0 #fff #fff #a0a0a0;box-shadow:inset 1px 1px 0 #fff"></div>
<div class="a " style="left:500px;top:175px;width:4px;height:1px;background:#fff"></div>
<div class="a " style="left:676px;top:175px;width:544px;height:1px;background:#fff"></div>
<div class="a t " style="left:504px;top:174px;font-size:9.4px">Empresa</div>
<div class="a t " style="left:545px;top:174px;font-size:9.4px">Nr.Docto</div>
<div class="a t " style="left:591px;top:174px;font-size:9.4px">Tipo Docto</div>
<div class="a in " style="left:504px;top:187px;width:35px;height:21px;"><span style=""></span></div>
<div class="a in " style="left:542px;top:187px;width:46px;height:21px;"><span style=""></span></div>
<div class="a in " style="left:591px;top:187px;width:82px;height:21px;"><span></span><div class="cbtn"><svg width="7" height="4" viewBox="0 0 7 4"><path d="M0 0h7L3.5 4z" fill="#000"/></svg></div></div>
<svg class="a" style="left:677px;top:187px" width="25" height="21" viewBox="0 0 25 21"><g fill="#000"><rect x="0" y="0" width="1.500" height="20"/><rect x="3" y="0" width="1" height="20"/><rect x="5" y="0" width="2" height="14"/><rect x="8" y="0" width="1" height="14"/><rect x="10" y="0" width="2" height="14"/><rect x="13" y="0" width="1" height="14"/><rect x="15" y="0" width="2" height="14"/><rect x="18" y="0" width="1" height="14"/><rect x="20" y="0" width="1.500" height="20"/><rect x="22.500" y="0" width="1.500" height="20"/></g><text x="5" y="20.500" font-family="Liberation Sans,sans-serif" font-size="7" fill="#000">000</text></svg>
<div class="a btn" style="left:703px;top:186px;width:78px;height:24px;"></div>
<svg class="a" style="left:709px;top:190px" width="18" height="16" viewBox="0 0 18 16"><path d="M1.500 1.500h7l3 3v9h-10z" fill="#fff" stroke="#000" stroke-width="1"/><path d="M3 5h2M3 7.500h2M3 10h2M6 5h3M6 7.500h1" stroke="#000" stroke-width="1"/><path d="M6 8.500h5V5.500l6 5-6 5v-3H6z" fill="#e8141c"/></svg>
<div class="a t " style="left:729px;top:192px;">Adicionar</div>
<div class="a btn" style="left:505px;top:210px;width:168px;height:21px;"></div>
<svg class="a" style="left:519px;top:212px" width="18" height="16" viewBox="0 0 18 16"><rect x="1" y="4" width="6" height="5" fill="#00d0d0" stroke="#000" stroke-width=".8"/><rect x="4" y="1.500" width="6" height="5" fill="#00d0d0" stroke="#000" stroke-width=".8"/><rect x="7" y="4" width="5" height="4" fill="#fff" stroke="#000" stroke-width=".8"/><path d="M14 1v5h-2l3 3.500 3-3.500h-2V1z" fill="#000"/><rect x="12" y="10.500" width="5" height="5" fill="#e8141c"/></svg>
<div class="a t " style="left:540px;top:215px;">Verificar Carregamentos</div>
<div class="a btn" style="left:677px;top:210px;width:128px;height:21px;"></div>
<svg class="a" style="left:681px;top:213px" width="18" height="16" viewBox="0 0 18 16"><path d="M1 3.500h8M6.500 1l3 2.500-3 2.500" stroke="#1a3ae0" stroke-width="1.600" fill="none"/><path d="M2 11.500h6M5 8.500v6" stroke="#e8141c" stroke-width="1.800"/><path d="M13.500 1v2M13.500 5v2M13.500 9v2M13.500 13v2" stroke="#000" stroke-width="2"/><rect x="10.500" y="0" width="2" height="2" fill="#e8141c"/></svg>
<div class="a t " style="left:701px;top:215px;">Buscar de uma Lista</div>
<div class="a " style="left:499px;top:231px;width:730px;height:485px;background:#ffffe1;border:1px solid #a0a0a0;box-shadow:inset 1px 1px 0 #696969"></div>
<div class="a gh" style="left:500px;top:233px;width:13.6px;height:20px;font-size:11px"></div>
<div class="a gh" style="left:513.6px;top:233px;width:37.4px;height:20px;text-align:center;padding-left:0;font-size:11px">Emp</div>
<div class="a gh" style="left:551px;top:233px;width:79px;height:20px;font-size:11px">Nº Docto Fiscal</div>
<div class="a gh" style="left:630px;top:233px;width:74px;height:20px;text-align:center;padding-left:0;font-size:11px">Emissão</div>
<div class="a gh" style="left:704px;top:233px;width:65px;height:20px;font-size:11px">Percurso</div>
<div class="a gh" style="left:769px;top:233px;width:125px;height:20px;font-size:11px">Situação da Averbação</div>
<div class="a gh" style="left:894px;top:233px;width:89px;height:20px;font-size:11px">Usuário Cadastro</div>
<div class="a gh" style="left:983px;top:233px;width:129px;height:20px;text-align:center;padding-left:0;font-size:11px">Data Cadastro</div>
<div class="a gh" style="left:1112px;top:233px;width:92px;height:20px;font-size:11px">Usuário Alteração</div>
<div class="a gh" style="left:1204px;top:233px;width:20px;height:20px;font-size:11px"></div>
<div class="a gh" style="left:500px;top:253px;width:13.6px;height:18px;"><svg style="position:absolute;left:3px;top:2px" width="6" height="11" viewBox="0 0 6 11"><path d="M0 0v11l6-5.500z" fill="#000"/></svg></div>
<div class="a " style="left:513.6px;top:253px;width:720px;height:18px;background:#0078d7"></div>
<div class="a gc" style="left:513.6px;top:253px;width:37.4px;height:18px;text-align:right;padding-right:3px;border-right:1px solid #c0c0c0;padding-top:3px">100</div>
<div class="a gc" style="left:551px;top:253px;width:79px;height:18px;text-align:right;padding-right:3px;border-right:1px solid #c0c0c0;padding-top:3px">397401</div>
<div class="a gc" style="left:630px;top:253px;width:74px;height:18px;text-align:center;border-right:1px solid #c0c0c0;padding-top:3px">08/08/2018</div>
<div class="a gc" style="left:704px;top:253px;width:65px;height:18px;padding-left:3px;border-right:1px solid #c0c0c0;padding-top:3px">/</div>
<div class="a gc" style="left:769px;top:253px;width:125px;height:18px;padding-left:3px;border-right:1px solid #c0c0c0;padding-top:3px">Não Averbado</div>
<div class="a gc" style="left:894px;top:253px;width:89px;height:18px;padding-left:3px;border-right:1px solid #c0c0c0;padding-top:3px">SOFTRAN</div>
<div class="a gc" style="left:983px;top:253px;width:129px;height:18px;text-align:center;border-right:1px solid #c0c0c0;padding-top:3px">25/11/2019 17:11</div>
<div class="a gc" style="left:1112px;top:253px;width:92px;height:18px;padding-left:3px;border-right:1px solid #c0c0c0;padding-top:3px"></div>
<div class="a " style="left:501px;top:704px;width:719px;height:12px;background:#f0f0f0"></div>
<svg class="a" style="left:505px;top:705px" width="7" height="10" viewBox="0 0 7 10"><path d="M6 1L2 5l4 4" fill="none" stroke="#404040" stroke-width="2"/></svg>
<div class="a " style="left:518px;top:704px;width:17px;height:12px;background:#cdcdcd"></div>
</body></html>
